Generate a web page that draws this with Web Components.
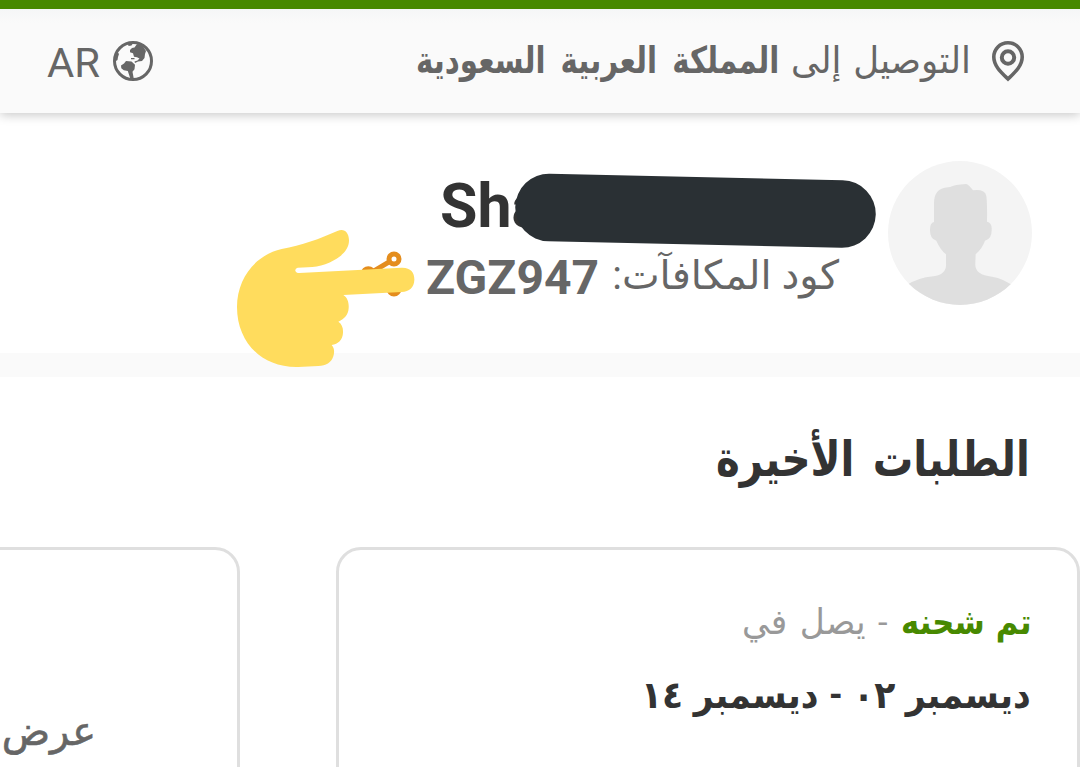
<!DOCTYPE html>
<html lang="ar" dir="rtl">
<head>
<meta charset="utf-8">
<title>حسابي</title>
<style>
    html, body {
        margin: 0;
        height: 767px;
        overflow: hidden;
        background: #fff;
        color: #333;
        font-family: Roboto, "DejaVu Sans", sans-serif;
    }
</style>
</head>
<body>
<account-page></account-page>

<script>
// one line of text, squeezed or stretched to the width given
class FitText extends HTMLElement {
    constructor() {
        super();
        this.attachShadow({mode: 'open'});
        this.shadowRoot.innerHTML = `
            <style>
                :host { display: block; flex: none; white-space: nowrap; }
                span { display: inline-block; transform-origin: 100% 50%; }
            </style>
            <span><slot></slot></span>`;
        this.span = this.shadowRoot.querySelector('span');
    }

    connectedCallback() {
        const width = Number(this.getAttribute('width'));
        this.style.width = width + 'px';
        this.span.style.transform = `scaleX(${width / this.span.offsetWidth})`;
    }
}

class DeliveryBar extends HTMLElement {
    constructor() {
        super();
        this.attachShadow({mode: 'open'});
        this.shadowRoot.innerHTML = `
            <style>
                :host {
                    display: flex;
                    justify-content: space-between;
                    align-items: center;
                    box-sizing: border-box;
                    height: 113px;
                    padding: 0 55px 0 48px;
                    border-top: 9px solid #478900;
                    background: linear-gradient(#f5f6f7, #fafafa 14px);
                    box-shadow: 0 2px 10px rgba(0, 0, 0, .22);
                    color: #666;
                    font-size: 37px;
                    line-height: 60px;
                }
                div { display: flex; align-items: center; }
                .place svg { margin-left: 20px; }
                .place fit-text { word-spacing: 3px; }
                .place .country { margin-right: 12px; word-spacing: 10px; }
                .lang { gap: 12px; font-size: 41px; }
                .lang fit-text { padding-top: 4px; }
                b { font-weight: 700; }
            </style>
            <div class="place">
                <svg width="34" height="42" viewBox="0 0 34 42">
                    <path d="M17 2.800C9 2.800 2.800 9 2.800 17c0 9 7.600 15.600 14.200 22 6.600-6.400 14.200-13 14.200-22C31.200 9 25 2.800 17 2.800z" fill="none" stroke="#666" stroke-width="3.600"/>
                    <circle cx="17" cy="17.500" r="6.200" fill="none" stroke="#666" stroke-width="4"/>
                </svg>
                <fit-text width="180">التوصيل إلى</fit-text>
                <fit-text class="country" width="363"><b>المملكة العربية السعودية</b></fit-text>
            </div>
            <div class="lang">
                <svg width="40" height="40" viewBox="0 0 40 40" fill="#666">
                    <circle cx="20" cy="20" r="18.500" fill="none" stroke="#666" stroke-width="3"/>
                    <path d="M17 9l2-2 2.500-.5L24 3l5 1 4 6-1 3-.5 4-2.500 3-4 .5-3 1.500-.5-1.500 3-1 2-2-2.500-1.200-3-.5-1-3.500-3-1z"/>
                    <path d="M8 24.500l3-2 2-2.500 5.500.5 3.500 3.300-.5 4.500-2 2.500 1.300 7-3.500-.3-1.500-4.500-1-3-4-.7-2.500-2z"/>
                    <path d="M1.500 21l3-2 .5-3 1-3-1.500-2L2 15zM15 3h4.500l-1 1.600-3 .5zM18 17h3.500v1.200H18z"/>
                </svg>
                <fit-text dir="ltr" width="53">AR</fit-text>
            </div>`;
    }
}

class UserAvatar extends HTMLElement {
    constructor() {
        super();
        this.attachShadow({mode: 'open'});
        this.shadowRoot.innerHTML = `
            <style>
                :host {
                    display: block;
                    flex: none;
                    width: 144px;
                    height: 144px;
                    border-radius: 50%;
                    overflow: hidden;
                    background: #f4f4f4;
                }
                svg { display: block; }
            </style>
            <svg width="144" height="144" viewBox="54 33 432 432">
                <path fill="#dfdfdf" d="M192 216V158Q193 119 224 113L240 111Q254 104 288 102Q296 103 309 121Q345 117 349 138Q352 160 351 215Q366 218 365 238Q366 267 345 272Q337 295 317 313L316 340Q313 375 366 380Q400 384 440 415V480H100V410Q145 382 190 379Q231 374 228 340V313Q210 298 199 272Q179 267 180 238Q180 218 192 216Z"/>
            </svg>`;
    }
}

class PointingHand extends HTMLElement {
    constructor() {
        super();
        this.attachShadow({mode: 'open'});
        this.shadowRoot.innerHTML = `
            <style>
                :host { display: block; width: 220px; height: 160px; }
                svg { display: block; }
            </style>
            <svg width="220" height="160" viewBox="0 0 660 480">
                <g fill="none" stroke="#e48d1d">
                    <path d="M510 124L445 163L521 210" stroke-width="15"/>
                    <circle cx="522" cy="117" r="15" stroke-width="15"/>
                    <circle cx="445" cy="161" r="15" stroke-width="15"/>
                    <circle cx="522" cy="207" r="15" stroke-width="15"/>
                </g>
                <path fill="#ffdc5d" d="M185 87C245 77 300 56 352 33C373 24 386 37 387 60C388 87 367 107 343 120C305 142 277 142 233 143Q225 145 226 152Q228 159 238 159L545 143C573 142 584 159 583 180C582 203 568 215 545 216L370 225C382 232 387 247 386 264C385 284 374 296 355 305C366 312 370 325 369 338C368 359 355 372 335 375C343 383 344 397 340 409C334 428 318 438 295 438L235 441C124 444 51 365 51 261C51 174 108 104 185 87Z"/>
            </svg>`;
    }
}

class ProfileHeader extends HTMLElement {
    constructor() {
        super();
        this.attachShadow({mode: 'open'});
        this.shadowRoot.innerHTML = `
            <style>
                :host {
                    position: relative;
                    display: flex;
                    box-sizing: border-box;
                    height: 264px;
                    padding: 48px 48px 0;
                    border-bottom: 24px solid #fafafa;
                }
                .info { width: 450px; }
                .name {
                    display: flex;
                    justify-content: flex-end;
                    height: 87px;
                    font-size: 62px;
                    line-height: 89px;
                    font-weight: 700;
                }
                .code {
                    display: flex;
                    align-items: center;
                    padding-right: 49px;
                    height: 56px;
                    color: #666;
                    font-size: 40px;
                    line-height: 56px;
                }
                .code b { font-size: 48px; }
                .value { margin-right: 13px; padding-top: 7px; }
                .marker { position: absolute; left: 515px; top: 58px; }
                pointing-hand { position: absolute; left: 220px; top: 107px; }
            </style>
            <user-avatar></user-avatar>
            <div class="info">
                <div class="name"><fit-text dir="ltr" width="104">Sha</fit-text></div>
                <div class="code">
                    <fit-text width="227">كود المكافآت:</fit-text>
                    <fit-text class="value" dir="ltr" width="173"><b>ZGZ947</b></fit-text>
                </div>
            </div>
            <svg class="marker" width="362" height="80" viewBox="0 0 362 80">
                <path d="M34 36.500L327 43" stroke="#2a3034" stroke-width="67.500" stroke-linecap="round"/>
            </svg>
            <pointing-hand></pointing-hand>`;
    }
}

class OrderCard extends HTMLElement {
    constructor() {
        super();
        this.attachShadow({mode: 'open'});
        this.shadowRoot.innerHTML = `
            <style>
                :host {
                    display: block;
                    flex: none;
                    box-sizing: border-box;
                    width: 744px;
                    height: 400px;
                    padding: 41px 46px;
                    border: 3px solid #dfdfdf;
                    border-radius: 25px;
                }
            </style>
            <slot></slot>`;
    }
}

class RecentOrders extends HTMLElement {
    constructor() {
        super();
        this.attachShadow({mode: 'open'});
        this.shadowRoot.innerHTML = `
            <style>
                :host { display: block; }
                .title {
                    height: 170px;
                    box-sizing: border-box;
                    padding: 48px 50px 0 0;
                    font-size: 49px;
                    line-height: 70px;
                    font-weight: 700;
                    word-spacing: 10px;
                }
                .cards { display: flex; gap: 96px; }
                .status { display: flex; height: 72px; font-size: 35px; line-height: 64px; color: #999; }
                .ok { color: #478900; font-weight: 700; word-spacing: 4px; }
                .eta { margin-right: 13px; word-spacing: 4px; }
                .dates { font-size: 38px; line-height: 64px; font-weight: 700; word-spacing: 2px; }
                .all {
                    padding: 109px 95px 0 0;
                    font-size: 40px;
                    line-height: 64px;
                    color: #666;
                    -webkit-text-stroke: .6px #666;
                }
            </style>
            <div class="title"><fit-text width="314">الطلبات الأخيرة</fit-text></div>
            <div class="cards">
                <order-card>
                    <div class="status">
                        <fit-text class="ok" width="130">تم شحنه</fit-text>
                        <fit-text class="eta" width="146">- يصل في</fit-text>
                    </div>
                    <div class="dates"><fit-text width="390">ديسمبر ٠٢ - ديسمبر ١٤</fit-text></div>
                </order-card>
                <order-card>
                    <div class="all"><fit-text width="94">عرض</fit-text></div>
                </order-card>
            </div>`;
    }
}

class AccountPage extends HTMLElement {
    constructor() {
        super();
        this.attachShadow({mode: 'open'});
        this.shadowRoot.innerHTML = `
            <style>
                :host { display: flex; flex-direction: column; height: 767px; overflow: hidden; }
                delivery-bar { position: relative; z-index: 1; }
                profile-header, delivery-bar { flex: none; }
            </style>
            <delivery-bar></delivery-bar>
            <profile-header></profile-header>
            <recent-orders></recent-orders>`;
    }
}

customElements.define('fit-text', FitText);
customElements.define('delivery-bar', DeliveryBar);
customElements.define('user-avatar', UserAvatar);
customElements.define('pointing-hand', PointingHand);
customElements.define('profile-header', ProfileHeader);
customElements.define('order-card', OrderCard);
customElements.define('recent-orders', RecentOrders);
customElements.define('account-page', AccountPage);
</script>
</body>
</html>
